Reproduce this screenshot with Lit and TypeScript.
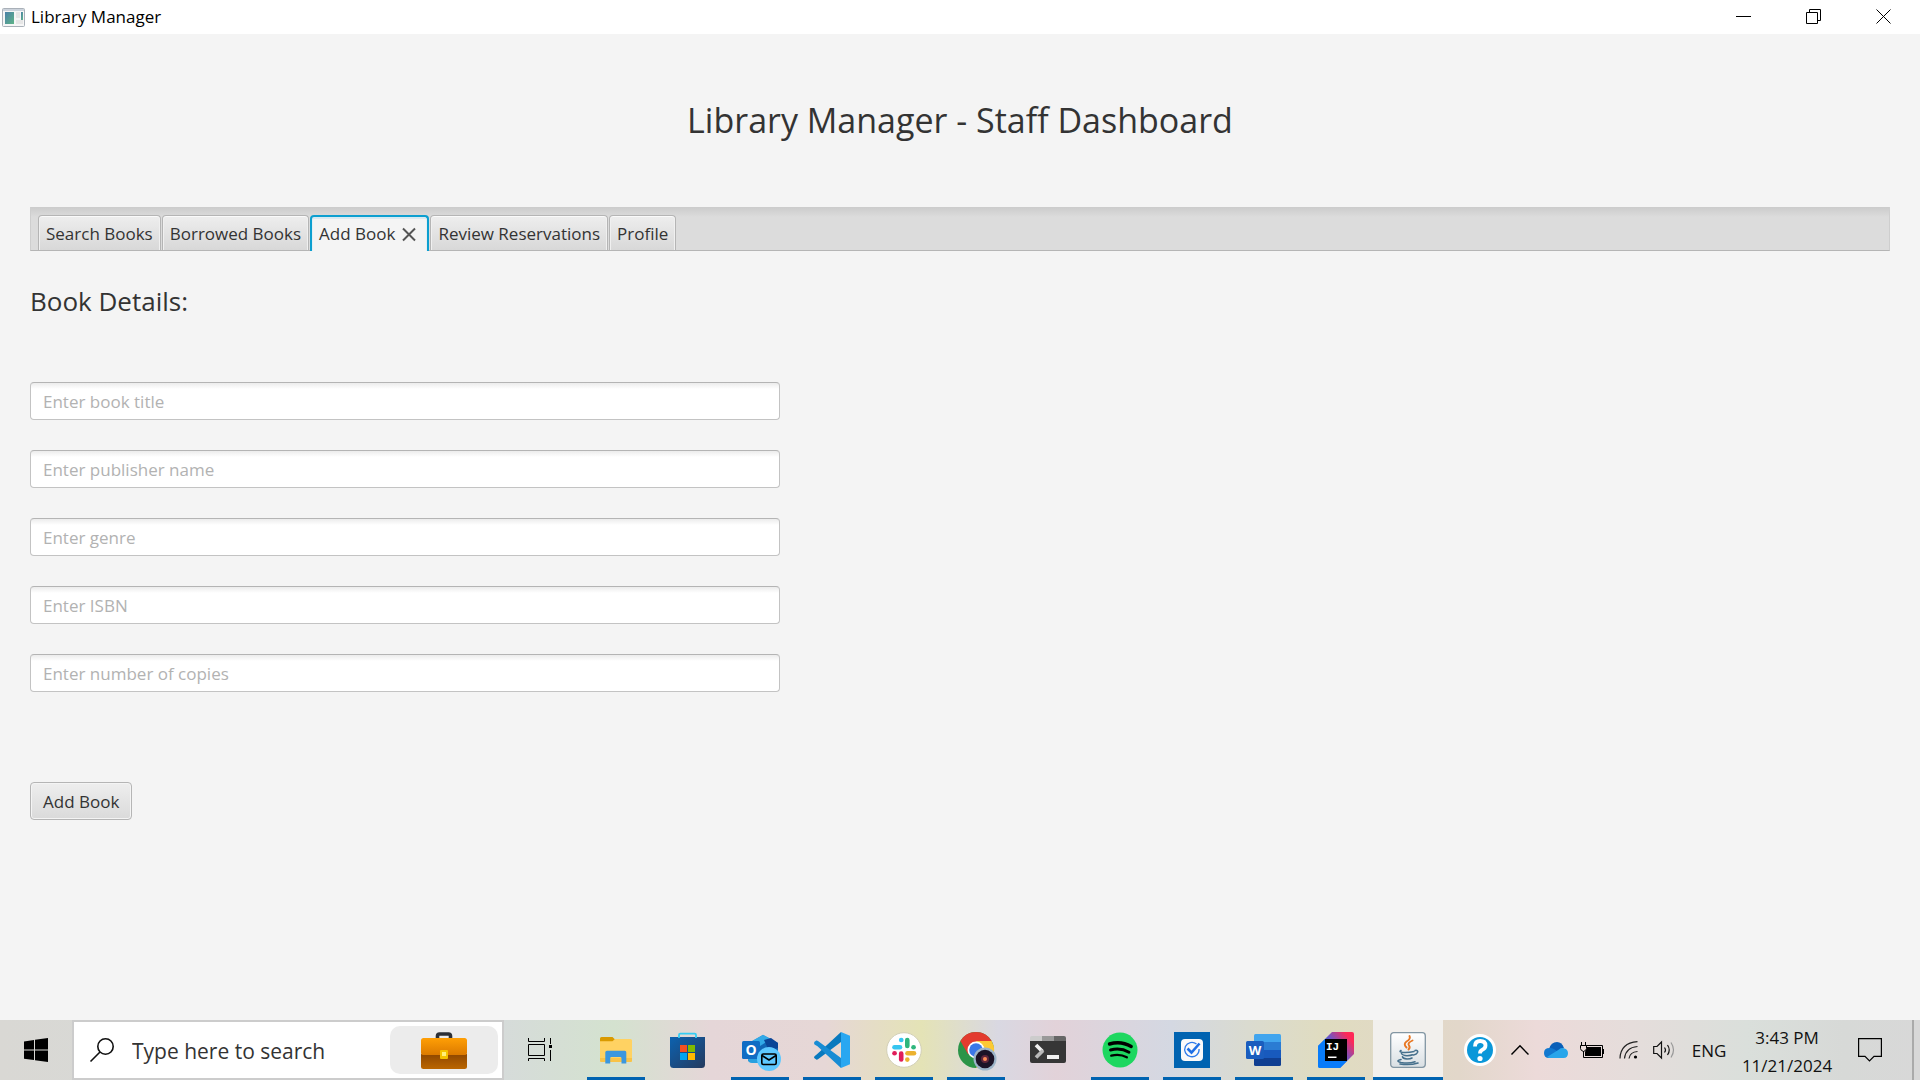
import { LitElement, html, svg, css, nothing } from "lit";
import { customElement, property, state } from "lit/decorators.js";
import { classMap } from "lit/directives/class-map.js";

const icons = {
  explorer: svg`
    <path d="M2 6.5Q2 5 3.500 5H14.500L17 7.500L15.500 12H2Z" fill="#d99a00"/>
    <path d="M2 9.300H14.500L17 7H32.500Q34 7 34 8.500V28.500Q34 30 32.500 30H3.500Q2 30 2 28.500Z" fill="#ffd262"/>
    <path d="M2 26H34V28.500Q34 30 32.500 30H3.500Q2 30 2 28.500Z" fill="#f9c347"/>
    <path d="M7.300 31.500V20.300Q7.300 18.700 9 18.700H26.800Q28.300 18.700 28.300 20.300V31.500H23.500V26.300Q23.500 25 22 25H13.500Q12.200 25 12.200 26.300V31.500Z" fill="#3b97de"/>`,
  store: svg`
    <defs><linearGradient id="st" x1="0" y1="0" x2="1" y2="1"><stop offset="0" stop-color="#0c62b0"/><stop offset="1" stop-color="#253a5e"/></linearGradient></defs>
    <path d="M0 5H35V32.500Q35 36 31.500 36H3.500Q0 36 0 32.500Z" fill="url(#st)"/>
    <path d="M9 6V3Q9 1.700 10.300 1.700H24.700Q26 1.700 26 3V6" fill="none" stroke="#35cdf3" stroke-width="1.800"/>
    <path d="M10 13h7v7h-7z" fill="#f25022"/><path d="M18 13h7v7h-7z" fill="#7fba00"/>
    <path d="M10 21h7v7h-7z" fill="#00a4ef"/><path d="M18 21h7v7h-7z" fill="#ffb900"/>`,
  outlook: svg`
    <path d="M7 11L21 3L36 11V26H12Q7 32 6 28Z" fill="#1066b5"/>
    <path d="M10 9L21 2.700L29 7L18 14Z" fill="#32a9e7"/>
    <path d="M22 8L29 6L36 11V16L27 19Z" fill="#0a4597"/>
    <path d="M6 25H20V31H10Q6 31 6 27Z" fill="#27a0df"/>
    <rect x="0" y="9" width="18" height="18" rx="1.500" fill="#0f6cc4"/>
    <text x="9" y="23" text-anchor="middle" font-size="14" font-weight="700" fill="#fff">O</text>
    <circle cx="27" cy="27" r="12" fill="#5ec8ff"/>
    <rect x="19.800" y="22" width="14.400" height="10.500" rx="1.500" fill="none" stroke="#000" stroke-width="1.600"/>
    <path d="M20 23.500L27 28L34 23.500" fill="none" stroke="#000" stroke-width="1.500"/>`,
  vscode: svg`
    <path d="M27 0L3.500 21.700L0.500 24.200Q-.500 25.500 .5 26.300L2.300 27.500Q3 28 4 27.200L27 10Z" fill="#0879be"/>
    <path d="M27 36L3.500 14.300L.5 12.500Q-.5 11 .5 9.700L2.300 8.600Q3 8.200 4 9L27 26Z" fill="#178cd4"/>
    <path d="M27 0L36 3.800V32.200L27 36Z" fill="#29a7f1"/>`,
  slack: svg`
    <circle cx="18" cy="18" r="17.300" fill="#fff" stroke="#d3d0b8" stroke-width="1"/>
    <g stroke-width="4.600" stroke-linecap="round" fill="none">
      <path d="M8.500 15.200H14" stroke="#36c5f0"/><path d="M15.200 8H15.300" stroke="#36c5f0"/>
      <path d="M21.300 8V14" stroke="#2eb67d"/><path d="M27.500 15.200H27.600" stroke="#2eb67d"/>
      <path d="M21.500 21.300H28" stroke="#ecb22e"/><path d="M21.300 27.500V27.600" stroke="#ecb22e"/>
      <path d="M15.200 21.500V27.500" stroke="#e01e5a"/><path d="M8.500 21.300H8.600" stroke="#e01e5a"/>
    </g>`,
  chrome: svg`
    <circle cx="18" cy="18" r="18" fill="#2b9448"/>
    <path d="M18 18L2.400 9A18 18 0 0 1 33.600 9Z" fill="#e33b2e"/>
    <path d="M18 9H33.600A18 18 0 0 1 18 36L26 22.500Z" fill="#fcc934"/>
    <path d="M2.400 9L10.200 22.500L18 9Z" fill="#e33b2e"/>
    <circle cx="18" cy="18" r="8.500" fill="#fff"/><circle cx="18" cy="18" r="6.800" fill="#3a78e8"/>
    <circle cx="27" cy="27" r="11.500" fill="#9cb4c8"/><circle cx="27" cy="27" r="9.300" fill="#1b1327"/>
    <circle cx="27" cy="27" r="4" fill="#60263a"/><circle cx="27" cy="27" r="2" fill="#ff8d56"/>`,
  terminal: svg`
    <path d="M0 9V6Q0 4 2 4H12V9Z" fill="#cccccc"/><path d="M12 4H24V9H12Z" fill="#999"/><path d="M24 4H34Q36 4 36 6V9H24Z" fill="#666"/>
    <path d="M0 9H36V29Q36 31 34 31H2Q0 31 0 29Z" fill="#363636"/>
    <path d="M6 13L12.500 19.500" stroke="#f0f0f0" stroke-width="3.800"/>
    <path d="M13 18.500L6 25.500" stroke="#b9b9b9" stroke-width="3.800"/>
    <rect x="17" y="23" width="12" height="4" fill="#f0f0f0"/>`,
  spotify: svg`
    <circle cx="18" cy="18" r="17.500" fill="#1ed760"/>
    <g fill="none" stroke="#000" stroke-linecap="round">
      <path d="M7.500 12Q19 8.500 29.200 14.500" stroke-width="3.400"/>
      <path d="M8.500 18Q18.500 15.300 27 20.200" stroke-width="2.900"/>
      <path d="M9.300 23.600Q18 21.500 24.800 25.300" stroke-width="2.400"/>
    </g>`,
  todo: svg`
    <path d="M0 0H36V36H0Z" fill="#0063b1"/>
    <rect x="7" y="7" width="22" height="22" rx="4" fill="#fafafa"/>
    <path d="M22.500 12A7.200 7.200 0 1 0 25.100 17" fill="none" stroke="#2f7bea" stroke-width="1.300"/>
    <path d="M13.500 16.500L17.500 20.500L25.500 11.500" fill="none" stroke="#1f6fe5" stroke-width="2.600"/>`,
  word: svg`
    <path d="M8 10V3.500Q8 2 9.500 2H33.500Q35 2 35 3.500V10Z" fill="#41a5ee"/>
    <path d="M8 10H35V18H8Z" fill="#2b7cd3"/><path d="M8 18H35V26H8Z" fill="#185abd"/>
    <path d="M8 26H35V32.500Q35 34 33.500 34H9.500Q8 34 8 32.500Z" fill="#103f91"/>
    <rect x="0" y="9" width="18" height="18" rx="1.500" fill="#1a5dbe"/>
    <text x="9" y="23" text-anchor="middle" font-size="13" font-weight="700" fill="#fff">W</text>`,
  intellij: svg`
    <defs><linearGradient id="ij" x1="0.200" y1="0.700" x2="0.950" y2="0.100"><stop offset="0" stop-color="#087cfa"/><stop offset=".45" stop-color="#6b57c8"/><stop offset=".9" stop-color="#fe2857"/></linearGradient></defs>
    <path d="M14 0H34Q36 0 36 2V22L22 36H2Q0 36 0 34V14Z" fill="url(#ij)"/>
    <path d="M0 14L7 7V29H29L22 36H2Q0 36 0 34Z" fill="#087cfa"/>
    <path d="M7 7H29V29H7Z" fill="#000"/>
    <text class="mono" x="14.500" y="18" text-anchor="middle" font-size="11" font-weight="700" fill="#fff">IJ</text>
    <path d="M10 24.500H18.500V26H10Z" fill="#fff"/>`,
  java: svg`
    <defs><linearGradient id="jv" x1="0" y1="0" x2="0" y2="1"><stop offset="0" stop-color="#fff"/><stop offset="1" stop-color="#d9dfe3"/></linearGradient></defs>
    <rect x=".7" y=".7" width="34.600" height="34.600" rx="3" fill="url(#jv)" stroke="#8296a3" stroke-width="1.300"/>
    <g fill="none" stroke="#e87722" stroke-width="1.900" stroke-linecap="round">
      <path d="M19.500 4Q21 7 16.500 9.500Q13 12 16.500 15.500"/><path d="M22.500 8.500Q17 11 19 13.500Q20.500 15.500 18.500 17.500"/>
    </g>
    <g fill="none" stroke="#46708c" stroke-width="1.600" stroke-linecap="round">
      <path d="M11 18.500Q8.500 20 13 20.500Q19 20.800 24 19.500"/><path d="M25 18.500Q28.500 18 27.500 20.500Q26.500 22.500 23.500 23"/>
      <path d="M11.500 21.500Q12.500 23.500 17 23.700Q21 23.700 22.500 22.800"/><path d="M12.500 24.800Q13 26.800 17 27Q20.500 27 22 26"/>
      <path d="M11 27.500Q5 29 11 30.500Q19 31.800 25 29.800"/><path d="M10 32Q20 33.500 28 31"/>
    </g>`,
};

type IconName = keyof typeof icons;

interface TaskbarApp {
  icon: IconName;
  label: string;
  open: boolean;
}

const apps: TaskbarApp[] = [
  { icon: "explorer", label: "File Explorer", open: true },
  { icon: "store", label: "Microsoft Store", open: false },
  { icon: "outlook", label: "Outlook", open: true },
  { icon: "vscode", label: "Visual Studio Code", open: true },
  { icon: "slack", label: "Slack", open: true },
  { icon: "chrome", label: "Chrome", open: true },
  { icon: "terminal", label: "Terminal", open: false },
  { icon: "spotify", label: "Spotify", open: true },
  { icon: "todo", label: "Tasks", open: true },
  { icon: "word", label: "Word", open: true },
  { icon: "intellij", label: "IntelliJ IDEA", open: true },
  { icon: "java", label: "Library Manager", open: true },
];

const tabs = ["Search Books", "Borrowed Books", "Add Book", "Review Reservations", "Profile"];

const fields = [
  { name: "title", hint: "Enter book title" },
  { name: "publisher", hint: "Enter publisher name" },
  { name: "genre", hint: "Enter genre" },
  { name: "isbn", hint: "Enter ISBN" },
  { name: "copies", hint: "Enter number of copies" },
];

const reset = css`
  * { box-sizing: border-box; }
  button, input {
    margin: 0; padding: 0; border: 0; background: none; color: inherit; font: inherit; outline: none;
  }
  svg { display: block; flex: none; overflow: visible; }
`;

@customElement("title-bar")
export class TitleBar extends LitElement {
  static styles = [reset, css`
    :host { display: flex; justify-content: space-between; height: 34px; background: #fff; color: #000; font-size: 17px; }
    .name { display: flex; align-items: center; gap: 6px; padding-left: 2px; line-height: 34px; }
    .buttons { display: flex; padding-right: 2px; }
    .buttons button { display: grid; place-items: center; width: 70px; height: 33px; }
  `];

  render() {
    return html`
      <div class="name">
        <svg width="23" height="19" viewBox="0 0 23 19">
          <defs><linearGradient id="g" x1="0" y1="0" x2="1" y2="1"><stop offset="0" stop-color="#4a80a8"/><stop offset="1" stop-color="#5fb487"/></linearGradient></defs>
          <rect x=".5" y=".5" width="22" height="18" rx="1" fill="#f6f6f6" stroke="#a9b0b8"/>
          <path d="M1 1H22V3H1Z" fill="#ccd3dc"/><path d="M3 4H12V16H3Z" fill="url(#g)"/>
          <path d="M14 4H18V10H14ZM14 12H21V16H14Z" fill="#e6e6e6"/><path d="M19 4H21V12H19Z" fill="url(#g)"/>
        </svg>
        <span>Library Manager</span>
      </div>
      <div class="buttons">
        <button aria-label="Minimize"><svg width="15" height="15"><path d="M0 7.500H15" stroke="#000"/></svg></button>
        <button aria-label="Restore"><svg width="15" height="15" fill="none" stroke="#000"><path d="M.5 3.500H11.500V14.500H.5ZM3.500 3.500V.5H14.500V11.500H11.500"/></svg></button>
        <button aria-label="Close"><svg width="15" height="15"><path d="M.5 .5L14.500 14.500M14.500 .5L.5 14.500" stroke="#000"/></svg></button>
      </div>`;
  }
}

@customElement("staff-dashboard")
export class StaffDashboard extends LitElement {
  @state() private selected = "Add Book";

  static styles = [reset, css`
    :host { display: block; padding: 56px 30px 30px; background: #f4f4f4; color: #333; font-size: 17px; line-height: 24px; }
    h1, h2 { margin: 0; font-weight: 400; }
    h1 { text-align: center; font-size: 34px; line-height: 60px; }
    .tabs { display: flex; align-items: flex-end; gap: 1px; height: 44px; margin-top: 57px; padding: 0 7px;
      background: linear-gradient(#cbcbcb, #dcdcdc 10px); border: 1px solid #cecece; border-top: 0; border-bottom: 1px solid #b5b5b5; }
    .tab { display: flex; align-items: center; gap: 7px; height: 35px; padding: 2px 7px 0; border: 1px solid #b5b5b5; border-bottom: 0;
      border-radius: 4px 4px 0 0; background: linear-gradient(#eee, #d8d8d8); box-shadow: inset 0 1px #fafafa, inset 1px 0 #f0f0f0, inset -1px 0 #f0f0f0; }
    .tab.selected { height: 36px; margin-bottom: -1px; padding: 0 11px 0 7px; border: 2px solid #0c9fd0; border-bottom: 0; background: #f4f4f4;
      box-shadow: inset 0 2px #d8eaf1, inset 1px 0 #e4f0f4, inset -1px 0 #e4f0f4; }
    .tab button { line-height: 32px; white-space: nowrap; }
    h2 { margin-top: 31px; font-size: 26px; line-height: 38px; }
    form { display: flex; flex-direction: column; align-items: flex-start; gap: 30px; margin-top: 62px; }
    form input { width: 100%; max-width: 750px; height: 38px; padding: 0 12px; border: 1px solid #c3c3c3; border-top-color: #b4b4b4;
      border-radius: 4px; background: linear-gradient(#ececec, #fff 6px); }
    form input::placeholder { color: #b2b2b2; opacity: 1; }
    .submit { height: 38px; margin-top: 60px; padding: 1px 12px 0; border: 1px solid #b5b5b5; border-radius: 4px;
      background: linear-gradient(#eee, #dadada); box-shadow: inset 0 0 0 1px #f4f4f4; }
  `];

  render() {
    return html`
      <h1>Library Manager - Staff Dashboard</h1>
      <div class="tabs" role="tablist">
        ${tabs.map((name) => {
          const selected = name === this.selected;
          return html`<div class=${classMap({ tab: true, selected })} role="presentation">
            <button role="tab" aria-selected=${selected} @click=${() => (this.selected = name)}>${name}</button>
            ${selected
              ? html`<button aria-label="Close tab"><svg width="14" height="13"><path d="M1 .5L13 12.500M13 .5L1 12.500" stroke="#555" stroke-width="2"/></svg></button>`
              : nothing}
          </div>`;
        })}
      </div>
      <h2>Book Details:</h2>
      <form @submit=${(e: Event) => e.preventDefault()}>
        ${fields.map((f) => html`<input type="text" name=${f.name} aria-label=${f.hint} placeholder=${f.hint}>`)}
        <button class="submit" type="submit">Add Book</button>
      </form>`;
  }
}

@customElement("app-icon")
export class AppIcon extends LitElement {
  @property() name: IconName = "explorer";

  static styles = css`
    :host { display: block; }
    svg { display: block; overflow: visible; font-family: "Open Sans", sans-serif; }
    .mono { font-family: "Liberation Mono", monospace; }
  `;

  render() {
    return html`<svg width="36" height="36" viewBox="0 0 36 36">${icons[this.name]}</svg>`;
  }
}

@customElement("task-bar")
export class TaskBar extends LitElement {
  static styles = [reset, css`
    :host { display: flex; height: 60px; color: #111; font-size: 17px;
      background: linear-gradient(90deg, #d9d8d4 0, #d6dbda 26%, #d4e2cf 32%, #e5d6d8 37%, #e6d7d6 43%, #e4e3b6 48%, #d9d8e2 52%, #e2d2d9 55%,
        #d4d8e2 61%, #dadbd0 65%, #e0dcc0 69%, #e2d7ca 76%, #ecdad9 80%, #e5dddb 85%, #dadfdb 91%, #d7d9d7 96%, #d8d8d8 100%); }
    button { display: grid; place-items: center; flex: none; }
    .start, .view { width: 72px; }
    .search { display: flex; align-items: center; flex: 0 1 432px; min-width: 240px; padding: 0 4px 0 16px; border: 2px solid #ccc; background: #fff; }
    .search input { flex: 1; min-width: 0; margin-left: 18px; padding-top: 2px; font-size: 21px; line-height: 30px; }
    .search input::placeholder { color: #333; opacity: 1; }
    .pill { width: 108px; height: 48px; border-radius: 10px; background: #ececec; }
    .apps { display: flex; padding-left: 4px; }
    .app { width: 70px; height: 60px; margin: 0 1px; }
    .open { background: linear-gradient(#0063b1, #0063b1) center bottom / 58px 3px no-repeat; }
    .active { background: linear-gradient(#0063b1, #0063b1) center bottom / 100% 3px no-repeat, #f2f0ed; }
    .tray { display: flex; align-items: center; margin-left: auto; }
    .tray button { height: 60px; }
    .help { width: 44px; }
    .small { width: 36px; }
    .tray .lang { width: 58px; padding-right: 4px; }
    .tray .clock { width: 94px; padding-top: 4px; line-height: 28px; align-content: center; }
    .tray .note { width: 78px; padding-right: 6px; }
    .show { width: 8px; border-left: 2px solid #aaa; }
  `];

  render() {
    return html`
      <button class="start" aria-label="Start">
        <svg width="24" height="24"><path d="M0 3.500L10 2V11.500H0ZM11 1.800L24 0V11.500H11ZM0 12.500H10V22L0 20.700ZM11 12.500H24V24L11 22.200Z"/></svg>
      </button>
      <div class="search">
        <svg width="24" height="24" fill="none" stroke="#111" stroke-width="1.600"><circle cx="15.500" cy="8.500" r="7.700"/><path d="M10 14L.5 23.500"/></svg>
        <input type="text" aria-label="Search" placeholder="Type here to search">
        <button class="pill" aria-label="Search highlight">
          <svg width="46" height="37" viewBox="0 0 46 37">
            <defs>
              <linearGradient id="top" x1="0" y1="0" x2="0" y2="1"><stop offset="0" stop-color="#ff9f05"/><stop offset="1" stop-color="#dc7a00"/></linearGradient>
              <linearGradient id="low" x1="0" y1="0" x2="0" y2="1"><stop offset="0" stop-color="#8f4700"/><stop offset="1" stop-color="#bb6600"/></linearGradient>
            </defs>
            <path d="M16.500 7V4Q16.500 2 18.500 2H27.500Q29.500 2 29.500 4V7" fill="none" stroke="#2b2f36" stroke-width="3.600"/>
            <path d="M0 22H46V34.500Q46 37 43.500 37H2.500Q0 37 0 34.500Z" fill="url(#low)"/>
            <path d="M0 8.500Q0 6 2.500 6H43.500Q46 6 46 8.500V21Q46 23 44 23H2Q0 23 0 21Z" fill="url(#top)"/>
            <rect x="19" y="18" width="8" height="9" rx="1" fill="#f5c400"/><rect x="21" y="20" width="4" height="4" fill="#fff07a"/>
          </svg>
        </button>
      </div>
      <button class="view" aria-label="Task View">
        <svg width="25" height="24" fill="none" stroke="#000"><path d="M.5 0V3.500H16.500V0M.5 6.500H16.500V17.500H.5ZM.5 23V20.500H16.500V23M22.500 0V6M22.500 12V23"/><path d="M21 7H24V10H21Z" fill="#000" stroke="none"/></svg>
      </button>
      <div class="apps">
        ${apps.map((a) => html`
          <button class=${classMap({ app: true, open: a.open, active: a.icon === "java" })} aria-label=${a.label}>
            <app-icon name=${a.icon}></app-icon>
          </button>`)}
      </div>
      <div class="tray">
        <button class="help" aria-label="Help">
          <svg width="32" height="32"><circle cx="16" cy="16" r="16" fill="#fff"/><circle cx="16" cy="16" r="13" fill="#0a97d9"/>
            <path d="M11 12.500Q11 7 16.200 7Q21.500 7 21.500 11.500Q21.500 14.500 18 16Q16 17 16 19.500" fill="none" stroke="#fff" stroke-width="3.800"/><circle cx="16" cy="24.500" r="2.600" fill="#fff"/></svg>
        </button>
        <button class="small" aria-label="Show hidden icons"><svg width="18" height="10" fill="none" stroke="#000" stroke-width="1.400"><path d="M.5 9.500L9 .8L17.500 9.500"/></svg></button>
        <button class="small" aria-label="OneDrive">
          <svg width="24" height="16"><path d="M5 7Q7 0 13 0Q18 0 20 6L12 11Z" fill="#0a5fb8"/><path d="M5 16Q0 16 0 11Q0 6 5.500 6Q9 5.500 14 10Z" fill="#1278cf"/>
            <path d="M3 15L15 7.500Q17 5.500 20 6.300Q24 7.500 24 11.300Q24 16 19.500 16H5Z" fill="#28a5ea"/></svg>
        </button>
        <button class="small" aria-label="Battery">
          <svg width="24" height="17"><path d="M5 3.500H22.500V15.500H5" fill="none" stroke="#000"/><path d="M7 5H21V14H5V10Z"/><path d="M23 7H24V12H23Z"/>
            <path d="M.5 3.500H6.500V6.500Q6.500 8.500 3.500 9.500Q.5 8.500 .5 6.500Z" fill="#eadcda" stroke="#000"/><path d="M1.500 0V3M5.500 0V3M3.500 9V15.500H6" fill="none" stroke="#000"/></svg>
        </button>
        <button class="small" aria-label="Network">
          <svg width="19" height="18" fill="none" stroke="#222" stroke-width="1.200"><path d="M1 17.500Q1.500 2 18.500 .7M5.500 17.500Q6.500 6.500 18.500 5.500M10 17.500Q11 11 18.500 10.500"/><circle cx="16.500" cy="16" r="1.600" fill="#000" stroke="none"/></svg>
        </button>
        <button class="small" aria-label="Volume">
          <svg width="22" height="18" fill="none" stroke="#111" stroke-width="1.200"><path d="M.7 5.500H4L8.500 1V17L4 12.500H.7Z"/><path d="M11.500 6.500Q13.500 9 11.500 11.500M14.500 4Q18 9 14.500 14"/><path d="M18 1.500Q23 9 18 16.500" stroke="#999"/></svg>
        </button>
        <button class="lang">ENG</button>
        <button class="clock"><span>3:43 PM</span><span>11/21/2024</span></button>
        <button class="note" aria-label="Notifications"><svg width="24" height="24" fill="none" stroke="#000" stroke-width="1.200"><path d="M.6 .6H23.400V18.400H16L11.500 23L7 18.400H.6Z"/></svg></button>
        <button class="show" aria-label="Show desktop"></button>
      </div>`;
  }
}

@customElement("app-root")
export class AppRoot extends LitElement {
  static styles = css`
    :host { display: flex; flex-direction: column; min-height: 100vh; background: #f4f4f4; font-family: "Open Sans", "Noto Sans", sans-serif; }
    staff-dashboard { flex: 1; }
  `;

  render() {
    return html`
      <title-bar></title-bar>
      <staff-dashboard></staff-dashboard>
      <task-bar></task-bar>`;
  }
}
